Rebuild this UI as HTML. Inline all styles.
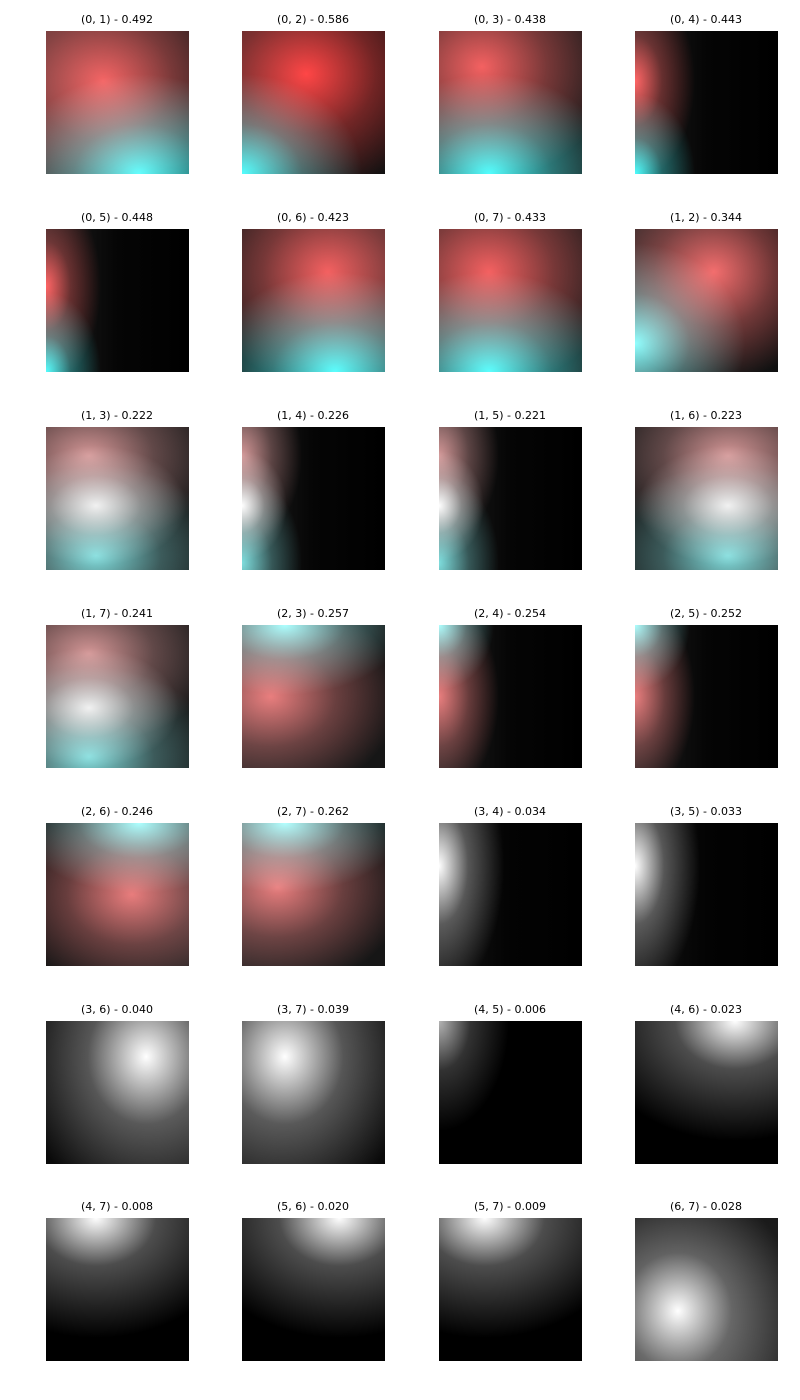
<!DOCTYPE html>
<html><head><meta charset="utf-8"><style>
body{margin:0;width:800px;height:1400px;background:#fff;position:relative;overflow:hidden;font-family:"DejaVu Sans","Liberation Sans",sans-serif}
.t{position:absolute;width:200px;text-align:center;font-size:11px;color:#000;line-height:13px}
.c{position:absolute;width:143px;height:143px;background-blend-mode:screen,screen,screen,screen,normal}
</style></head><body>
<div class="t" style="left:17px;top:13px">(0, 1) - 0.492</div>
<div class="c" style="left:46px;top:31px;background:radial-gradient(ellipse 140px 120px at 40% 35%,rgba(255,80,80,.95),rgba(255,80,80,.4) 50%,rgba(255,80,80,0)),radial-gradient(ellipse 130px 100px at 65% 100%,rgba(40,255,255,1),rgba(40,255,255,.4) 50%,rgba(40,255,255,0)),linear-gradient(90deg,#3a2a2a,#1a1a1a)"></div>
<div class="t" style="left:213px;top:13px">(0, 2) - 0.586</div>
<div class="c" style="left:242px;top:31px;background:radial-gradient(ellipse 140px 120px at 45% 30%,rgba(255,50,50,1),rgba(255,50,50,.4) 50%,rgba(255,50,50,0)),radial-gradient(ellipse 120px 100px at 0% 100%,rgba(40,255,255,1),rgba(40,255,255,.35) 50%,rgba(40,255,255,0)),linear-gradient(90deg,#2a2020,#101010)"></div>
<div class="t" style="left:410px;top:13px">(0, 3) - 0.438</div>
<div class="c" style="left:439px;top:31px;background:radial-gradient(ellipse 130px 115px at 30% 25%,rgba(255,80,80,.95),rgba(255,80,80,.4) 50%,rgba(255,80,80,0)),radial-gradient(ellipse 125px 100px at 35% 100%,rgba(40,255,255,1),rgba(40,255,255,.4) 50%,rgba(40,255,255,0)),linear-gradient(90deg,#2a2020,#1a1a1a)"></div>
<div class="t" style="left:606px;top:13px">(0, 4) - 0.443</div>
<div class="c" style="left:635px;top:31px;background:radial-gradient(ellipse 60px 100px at 0% 35%,rgba(255,80,80,1),rgba(255,80,80,.35) 45%,rgba(255,80,80,0)),radial-gradient(ellipse 60px 80px at 0% 100%,rgba(40,255,255,1),rgba(40,255,255,.35) 45%,rgba(40,255,255,0)),linear-gradient(90deg,#202020,#050505 50%,#000)"></div>
<div class="t" style="left:17px;top:211px">(0, 5) - 0.448</div>
<div class="c" style="left:46px;top:229px;background:radial-gradient(ellipse 55px 100px at 0% 40%,rgba(255,80,80,1),rgba(255,80,80,.35) 45%,rgba(255,80,80,0)),radial-gradient(ellipse 55px 80px at 0% 100%,rgba(40,255,255,1),rgba(40,255,255,.35) 45%,rgba(40,255,255,0)),linear-gradient(90deg,#202020,#050505 50%,#000)"></div>
<div class="t" style="left:213px;top:211px">(0, 6) - 0.423</div>
<div class="c" style="left:242px;top:229px;background:radial-gradient(ellipse 130px 115px at 60% 30%,rgba(255,80,80,.95),rgba(255,80,80,.4) 50%,rgba(255,80,80,0)),radial-gradient(ellipse 125px 100px at 65% 100%,rgba(40,255,255,1),rgba(40,255,255,.4) 50%,rgba(40,255,255,0)),linear-gradient(90deg,#1a1a1a,#2a2020)"></div>
<div class="t" style="left:410px;top:211px">(0, 7) - 0.433</div>
<div class="c" style="left:439px;top:229px;background:radial-gradient(ellipse 130px 115px at 35% 30%,rgba(255,80,80,.95),rgba(255,80,80,.4) 50%,rgba(255,80,80,0)),radial-gradient(ellipse 125px 100px at 35% 100%,rgba(40,255,255,1),rgba(40,255,255,.4) 50%,rgba(40,255,255,0)),linear-gradient(90deg,#2a2020,#1a1a1a)"></div>
<div class="t" style="left:606px;top:211px">(1, 2) - 0.344</div>
<div class="c" style="left:635px;top:229px;background:radial-gradient(ellipse 120px 110px at 55% 30%,rgba(255,100,100,.95),rgba(255,100,100,.4) 50%,rgba(255,100,100,0)),radial-gradient(ellipse 110px 100px at 0% 80%,rgba(120,255,255,1),rgba(120,255,255,.35) 50%,rgba(120,255,255,0)),linear-gradient(90deg,#222,#101010)"></div>
<div class="t" style="left:17px;top:409px">(1, 3) - 0.222</div>
<div class="c" style="left:46px;top:427px;background:radial-gradient(ellipse 90px 60px at 35% 55%,rgba(255,255,255,.9),rgba(255,255,255,.3) 50%,rgba(255,255,255,0)),radial-gradient(ellipse 130px 90px at 30% 20%,rgba(255,170,170,.8),rgba(255,170,170,.3) 50%,rgba(255,170,170,0)),radial-gradient(ellipse 130px 90px at 35% 90%,rgba(120,240,240,.9),rgba(120,240,240,.3) 50%,rgba(120,240,240,0)),linear-gradient(90deg,#2a2020,#181818)"></div>
<div class="t" style="left:213px;top:409px">(1, 4) - 0.226</div>
<div class="c" style="left:242px;top:427px;background:radial-gradient(ellipse 45px 55px at 0% 55%,rgba(255,255,255,1),rgba(255,255,255,.3) 50%,rgba(255,255,255,0)),radial-gradient(ellipse 60px 90px at 0% 20%,rgba(255,170,170,.8),rgba(255,170,170,.3) 50%,rgba(255,170,170,0)),radial-gradient(ellipse 60px 90px at 0% 95%,rgba(120,240,240,.9),rgba(120,240,240,.3) 50%,rgba(120,240,240,0)),linear-gradient(90deg,#202020,#050505 50%,#000)"></div>
<div class="t" style="left:410px;top:409px">(1, 5) - 0.221</div>
<div class="c" style="left:439px;top:427px;background:radial-gradient(ellipse 45px 55px at 0% 55%,rgba(255,255,255,1),rgba(255,255,255,.3) 50%,rgba(255,255,255,0)),radial-gradient(ellipse 60px 90px at 0% 20%,rgba(255,170,170,.8),rgba(255,170,170,.3) 50%,rgba(255,170,170,0)),radial-gradient(ellipse 60px 90px at 0% 95%,rgba(120,240,240,.9),rgba(120,240,240,.3) 50%,rgba(120,240,240,0)),linear-gradient(90deg,#202020,#050505 50%,#000)"></div>
<div class="t" style="left:606px;top:409px">(1, 6) - 0.223</div>
<div class="c" style="left:635px;top:427px;background:radial-gradient(ellipse 90px 60px at 65% 55%,rgba(255,255,255,.9),rgba(255,255,255,.3) 50%,rgba(255,255,255,0)),radial-gradient(ellipse 130px 90px at 65% 20%,rgba(255,170,170,.8),rgba(255,170,170,.3) 50%,rgba(255,170,170,0)),radial-gradient(ellipse 130px 90px at 65% 90%,rgba(120,240,240,.9),rgba(120,240,240,.3) 50%,rgba(120,240,240,0)),linear-gradient(90deg,#181818,#2a2020)"></div>
<div class="t" style="left:17px;top:607px">(1, 7) - 0.241</div>
<div class="c" style="left:46px;top:625px;background:radial-gradient(ellipse 90px 60px at 30% 58%,rgba(255,255,255,.9),rgba(255,255,255,.3) 50%,rgba(255,255,255,0)),radial-gradient(ellipse 130px 90px at 30% 20%,rgba(255,170,170,.8),rgba(255,170,170,.3) 50%,rgba(255,170,170,0)),radial-gradient(ellipse 130px 90px at 30% 92%,rgba(120,240,240,.9),rgba(120,240,240,.3) 50%,rgba(120,240,240,0)),linear-gradient(90deg,#2a2020,#181818)"></div>
<div class="t" style="left:213px;top:607px">(2, 3) - 0.257</div>
<div class="c" style="left:242px;top:625px;background:radial-gradient(ellipse 120px 70px at 30% 0%,rgba(140,255,255,1),rgba(140,255,255,.35) 50%,rgba(140,255,255,0)),radial-gradient(ellipse 130px 100px at 20% 50%,rgba(255,120,120,.9),rgba(255,120,120,.35) 50%,rgba(255,120,120,0)),linear-gradient(90deg,#222,#151515)"></div>
<div class="t" style="left:410px;top:607px">(2, 4) - 0.254</div>
<div class="c" style="left:439px;top:625px;background:radial-gradient(ellipse 55px 65px at 0% 0%,rgba(140,255,255,1),rgba(140,255,255,.35) 50%,rgba(140,255,255,0)),radial-gradient(ellipse 60px 100px at 0% 50%,rgba(255,120,120,.9),rgba(255,120,120,.35) 50%,rgba(255,120,120,0)),linear-gradient(90deg,#202020,#050505 50%,#000)"></div>
<div class="t" style="left:606px;top:607px">(2, 5) - 0.252</div>
<div class="c" style="left:635px;top:625px;background:radial-gradient(ellipse 55px 65px at 0% 0%,rgba(140,255,255,1),rgba(140,255,255,.35) 50%,rgba(140,255,255,0)),radial-gradient(ellipse 60px 100px at 0% 50%,rgba(255,120,120,.9),rgba(255,120,120,.35) 50%,rgba(255,120,120,0)),linear-gradient(90deg,#202020,#050505 50%,#000)"></div>
<div class="t" style="left:17px;top:805px">(2, 6) - 0.246</div>
<div class="c" style="left:46px;top:823px;background:radial-gradient(ellipse 120px 70px at 65% 0%,rgba(140,255,255,1),rgba(140,255,255,.35) 50%,rgba(140,255,255,0)),radial-gradient(ellipse 130px 100px at 60% 50%,rgba(255,120,120,.9),rgba(255,120,120,.35) 50%,rgba(255,120,120,0)),linear-gradient(90deg,#151515,#222)"></div>
<div class="t" style="left:213px;top:805px">(2, 7) - 0.262</div>
<div class="c" style="left:242px;top:823px;background:radial-gradient(ellipse 120px 70px at 30% 0%,rgba(140,255,255,1),rgba(140,255,255,.35) 50%,rgba(140,255,255,0)),radial-gradient(ellipse 130px 100px at 25% 45%,rgba(255,120,120,.9),rgba(255,120,120,.35) 50%,rgba(255,120,120,0)),linear-gradient(90deg,#222,#151515)"></div>
<div class="t" style="left:410px;top:805px">(3, 4) - 0.034</div>
<div class="c" style="left:439px;top:823px;background:radial-gradient(ellipse 65px 130px at 0% 30%,rgba(255,255,255,1),rgba(255,255,255,.3) 45%,rgba(255,255,255,0)),linear-gradient(90deg,#151515,#030303 50%,#000)"></div>
<div class="t" style="left:606px;top:805px">(3, 5) - 0.033</div>
<div class="c" style="left:635px;top:823px;background:radial-gradient(ellipse 65px 130px at 0% 30%,rgba(255,255,255,1),rgba(255,255,255,.3) 45%,rgba(255,255,255,0)),linear-gradient(90deg,#151515,#030303 50%,#000)"></div>
<div class="t" style="left:17px;top:1003px">(3, 6) - 0.040</div>
<div class="c" style="left:46px;top:1021px;background:radial-gradient(ellipse 130px 150px at 70% 25%,rgba(255,255,255,1),rgba(255,255,255,.3) 45%,rgba(255,255,255,0)),linear-gradient(90deg,#0a0a0a,#151515)"></div>
<div class="t" style="left:213px;top:1003px">(3, 7) - 0.039</div>
<div class="c" style="left:242px;top:1021px;background:radial-gradient(ellipse 130px 150px at 30% 25%,rgba(255,255,255,1),rgba(255,255,255,.3) 45%,rgba(255,255,255,0)),linear-gradient(90deg,#151515,#0a0a0a)"></div>
<div class="t" style="left:410px;top:1003px">(4, 5) - 0.006</div>
<div class="c" style="left:439px;top:1021px;background:radial-gradient(ellipse 70px 110px at 0% 0%,rgba(200,200,200,.9),rgba(200,200,200,.25) 45%,rgba(200,200,200,0)),#000"></div>
<div class="t" style="left:606px;top:1003px">(4, 6) - 0.023</div>
<div class="c" style="left:635px;top:1021px;background:radial-gradient(ellipse 150px 120px at 70% 0%,rgba(255,255,255,1),rgba(255,255,255,.3) 40%,rgba(255,255,255,0)),#000"></div>
<div class="t" style="left:17px;top:1200px">(4, 7) - 0.008</div>
<div class="c" style="left:46px;top:1218px;background:radial-gradient(ellipse 150px 120px at 35% 0%,rgba(255,255,255,1),rgba(255,255,255,.3) 40%,rgba(255,255,255,0)),#000"></div>
<div class="t" style="left:213px;top:1200px">(5, 6) - 0.020</div>
<div class="c" style="left:242px;top:1218px;background:radial-gradient(ellipse 150px 120px at 68% 0%,rgba(255,255,255,1),rgba(255,255,255,.3) 40%,rgba(255,255,255,0)),#000"></div>
<div class="t" style="left:410px;top:1200px">(5, 7) - 0.009</div>
<div class="c" style="left:439px;top:1218px;background:radial-gradient(ellipse 150px 120px at 32% 0%,rgba(255,255,255,1),rgba(255,255,255,.3) 40%,rgba(255,255,255,0)),#000"></div>
<div class="t" style="left:606px;top:1200px">(6, 7) - 0.028</div>
<div class="c" style="left:635px;top:1218px;background:radial-gradient(ellipse 120px 130px at 30% 65%,rgba(255,255,255,1),rgba(255,255,255,.3) 45%,rgba(255,255,255,0)),linear-gradient(180deg,#1a1a1a,#2a2a2a)"></div>
</body></html>
